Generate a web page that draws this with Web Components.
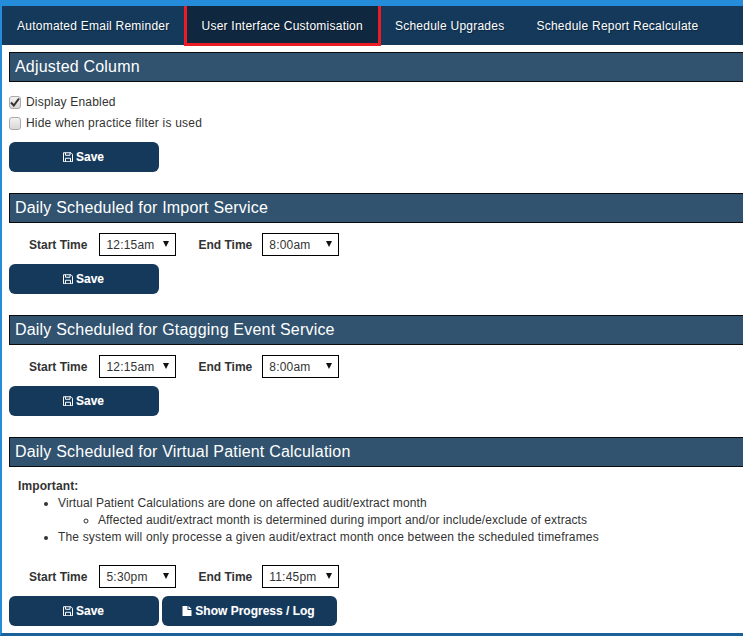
<!DOCTYPE html>
<html lang="en"><head><meta charset="utf-8"><title>Settings</title>
<style>
html,body{margin:0;padding:0;background:#fff}
body{font-family:"Liberation Sans",Arial,sans-serif;color:#333;font-size:12px;overflow:hidden}
</style></head><body>
<app-shell>
  <nav-bar>
    <nav-tab first>Automated Email Reminder</nav-tab>
    <nav-tab active>User Interface Customisation</nav-tab>
    <nav-tab>Schedule Upgrades</nav-tab>
    <nav-tab>Schedule Report Recalculate</nav-tab>
  </nav-bar>
  <set-section heading="Adjusted Column" style="margin-top:7px">
    <check-row checked style="margin-top:2px">Display Enabled</check-row>
    <check-row style="margin-top:5px">Hide when practice filter is used</check-row>
    <btn-row style="margin-top:11px"><app-button icon="save">Save</app-button></btn-row>
  </set-section>
  <set-section heading="Daily Scheduled for Import Service" style="margin-top:21px">
    <time-row start="12:15am" end="8:00am"></time-row>
    <btn-row><app-button icon="save">Save</app-button></btn-row>
  </set-section>
  <set-section heading="Daily Scheduled for Gtagging Event Service" style="margin-top:21px">
    <time-row start="12:15am" end="8:00am"></time-row>
    <btn-row><app-button icon="save">Save</app-button></btn-row>
  </set-section>
  <set-section heading="Daily Scheduled for Virtual Patient Calculation" style="margin-top:21px">
    <note-block></note-block>
    <time-row start="5:30pm" end="11:45pm"></time-row>
    <btn-row><app-button icon="save">Save</app-button><app-button icon="file" wide>Show Progress / Log</app-button></btn-row>
  </set-section>
</app-shell>
<script>
function def(name, html, extra){
  const t=document.createElement('template');t.innerHTML=html;
  customElements.define(name,class extends HTMLElement{
    constructor(){super();this.attachShadow({mode:'open'}).appendChild(t.content.cloneNode(true));}
    connectedCallback(){extra&&extra.call(this,this.shadowRoot);}
  });
}
def('app-shell',`<style>:host{display:block;box-sizing:border-box;height:636px;border-top:6px solid #258cd9;border-left:2px solid #258cd9;border-bottom:3px solid #1a6099;overflow:hidden}</style><slot></slot>`);
def('nav-bar',`<style>:host{display:flex;height:39px;background:#14395b}</style><slot></slot>`);
def('nav-tab',`<style>:host{display:flex;align-items:center;padding:0 16px;color:#fff;font-size:12px;letter-spacing:.24px;position:relative;text-shadow:1px 1px 1px rgba(0,0,0,.35);white-space:nowrap}
:host([first]){padding-left:15px}
:host([active]){background:#0f2840}
:host([active])::after{content:"";position:absolute;left:-2px;right:-2px;top:-4px;bottom:-1px;border:3px solid #ed1c24;pointer-events:none}
</style><slot></slot>`);
def('set-section',`<style>:host{display:block;margin-left:7px}
h2{box-sizing:border-box;height:30px;margin:0 -2px 0 0;border:1px solid #0b0b0b;border-right:0;background:#31536f;color:#fff;font:400 16px/28px "Liberation Sans",Arial,sans-serif;letter-spacing:.2px;padding-left:5px;white-space:nowrap}
.c{display:block;padding-top:10px}</style><h2></h2><div class="c"><slot></slot></div>`,function(s){s.querySelector('h2').textContent=this.getAttribute('heading');});
def('check-row',`<style>:host{display:flex;align-items:center;height:16px;gap:5px;letter-spacing:.2px;color:#333;font-size:12px}
i{box-sizing:border-box;width:12px;height:13px;border:1px solid #aaa;border-radius:3px;background:linear-gradient(#f2f2f2,#d8d8d8);display:flex;align-items:center;justify-content:center}
svg{display:none;width:10px;height:10px}:host([checked]) svg{display:block}
</style><i><svg viewBox="0 0 10 10"><path d="M1 5.5 3.8 8.5 9 1.5" fill="none" stroke="#333" stroke-width="2"/></svg></i><span><slot></slot></span>`);
def('btn-row',`<style>:host{display:flex;gap:3px;margin-top:8px}</style><slot></slot>`);
const icons={save:'<path d="M.5.5H8L9.5 2V9.5H.5Z" fill="none" stroke="#fff"/><path d="M2.5.5V3H7V.5M2.5 9.5V6H7.5V9.5" fill="none" stroke="#fff"/>',
file:'<path d="M.5 0H5.5V4H9.5V10.5H.5Z" fill="#fff"/><path d="M6.5 0 9.5 3H6.5Z" fill="#fff"/>'};
def('app-button',`<style>:host{box-sizing:border-box;display:flex;align-items:center;justify-content:center;gap:3px;width:150px;height:30px;padding-right:1px;background:#14395b;border-radius:6px;color:#fff;font-weight:700;font-size:12px;text-shadow:0 0 1px rgba(255,255,255,.25)}
:host([wide]){width:175px;padding-right:2px}svg{width:10px;height:10.5px;flex:none}</style><svg viewBox="0 0 10 10"></svg><span><slot></slot></span>`,function(s){const v=s.querySelector('svg');v.innerHTML=icons[this.getAttribute('icon')];v.setAttribute('viewBox',this.getAttribute('icon')=='file'?'0 0 10 10.5':'0 0 10 10');});
def('time-select',`<style>:host{display:block;position:relative;width:77px;height:23px}
select{appearance:none;-webkit-appearance:none;box-sizing:border-box;width:77px;height:23px;border:1px solid #000;border-radius:0;background:#fff;color:#333;font:12px "Liberation Sans",Arial,sans-serif;letter-spacing:.2px;padding:0 0 0 6px;margin:0;opacity:1}
.a{position:absolute;right:7px;top:8px;width:0;height:0;border:3.5px solid transparent;border-top:6px solid #111;border-bottom:0}
</style><select></select><span class="a"></span>`,function(s){const sel=s.querySelector('select');if(!sel.options.length){const o=document.createElement('option');o.textContent=this.getAttribute('value');sel.appendChild(o);}});
customElements.define('time-row',class extends HTMLElement{
  constructor(){super();this.attachShadow({mode:'open'});}
  connectedCallback(){
    this.shadowRoot.innerHTML=`<style>:host{display:flex;align-items:center;height:23px;padding-left:20px;font-size:12px}
b{color:#333;font-weight:700}.s{margin:0 22px 0 12px}.t{margin-left:10px}</style>
<b>Start Time</b><time-select class="s" value="${this.getAttribute('start')}"></time-select><b>End Time</b><time-select class="t" value="${this.getAttribute('end')}"></time-select>`;
  }
});
def('note-block',`<style>:host{display:block;padding:0 0 19px 9px;font-size:12px;line-height:17px;letter-spacing:.1px;color:#333}
strong{display:block;line-height:18px}ul{margin:0;padding-left:40px}.w{letter-spacing:.16px}</style>
<strong>Important:</strong>
<ul><li>Virtual Patient Calculations are done on affected audit/extract month
<ul><li>Affected audit/extract month is determined during import and/or include/exclude of extracts</li></ul></li>
<li class="w">The system will only processe a given audit/extract month once between the scheduled timeframes</li></ul>`);
</script>
</body></html>
